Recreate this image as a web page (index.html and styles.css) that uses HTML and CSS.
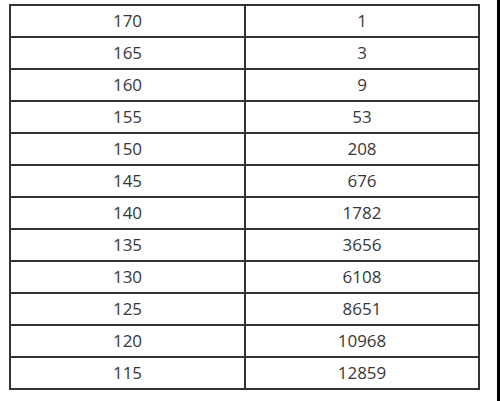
FILE: index.html
```html
<!DOCTYPE html>
<html>
<head>
<meta charset="utf-8">
<link rel="stylesheet" href="styles.css">
</head>
<body>
<div class="page">
  <div class="grid">
    <div class="cell">170</div><div class="cell">1</div>
    <div class="cell">165</div><div class="cell">3</div>
    <div class="cell">160</div><div class="cell">9</div>
    <div class="cell">155</div><div class="cell">53</div>
    <div class="cell">150</div><div class="cell">208</div>
    <div class="cell">145</div><div class="cell">676</div>
    <div class="cell">140</div><div class="cell">1782</div>
    <div class="cell">135</div><div class="cell">3656</div>
    <div class="cell">130</div><div class="cell">6108</div>
    <div class="cell">125</div><div class="cell">8651</div>
    <div class="cell">120</div><div class="cell">10968</div>
    <div class="cell">115</div><div class="cell">12859</div>
  </div>
  <div class="edge"></div>
</div>
</body>
</html>
```
FILE: styles.css
```css
html, body {
  margin: 0;
  padding: 0;
  background: #ffffff;
}
.page {
  width: 500px;
  height: 401px;
  display: flex;
  justify-content: space-between;
  align-items: flex-start;
}
.grid {
  margin-left: 9px;
  margin-top: 4px;
  display: grid;
  grid-template-columns: 233px 232px;
  grid-auto-rows: 30px;
  gap: 2px;
  padding: 2px;
  background: #333333;
}
.cell {
  background: #ffffff;
  color: #383838;
  font-family: "Open Sans", "DejaVu Sans", sans-serif;
  font-size: 17px;
  font-weight: 400;
  line-height: 30px;
  text-align: center;
}
.edge {
  width: 3px;
  height: 401px;
  background: #000000;
}
```
